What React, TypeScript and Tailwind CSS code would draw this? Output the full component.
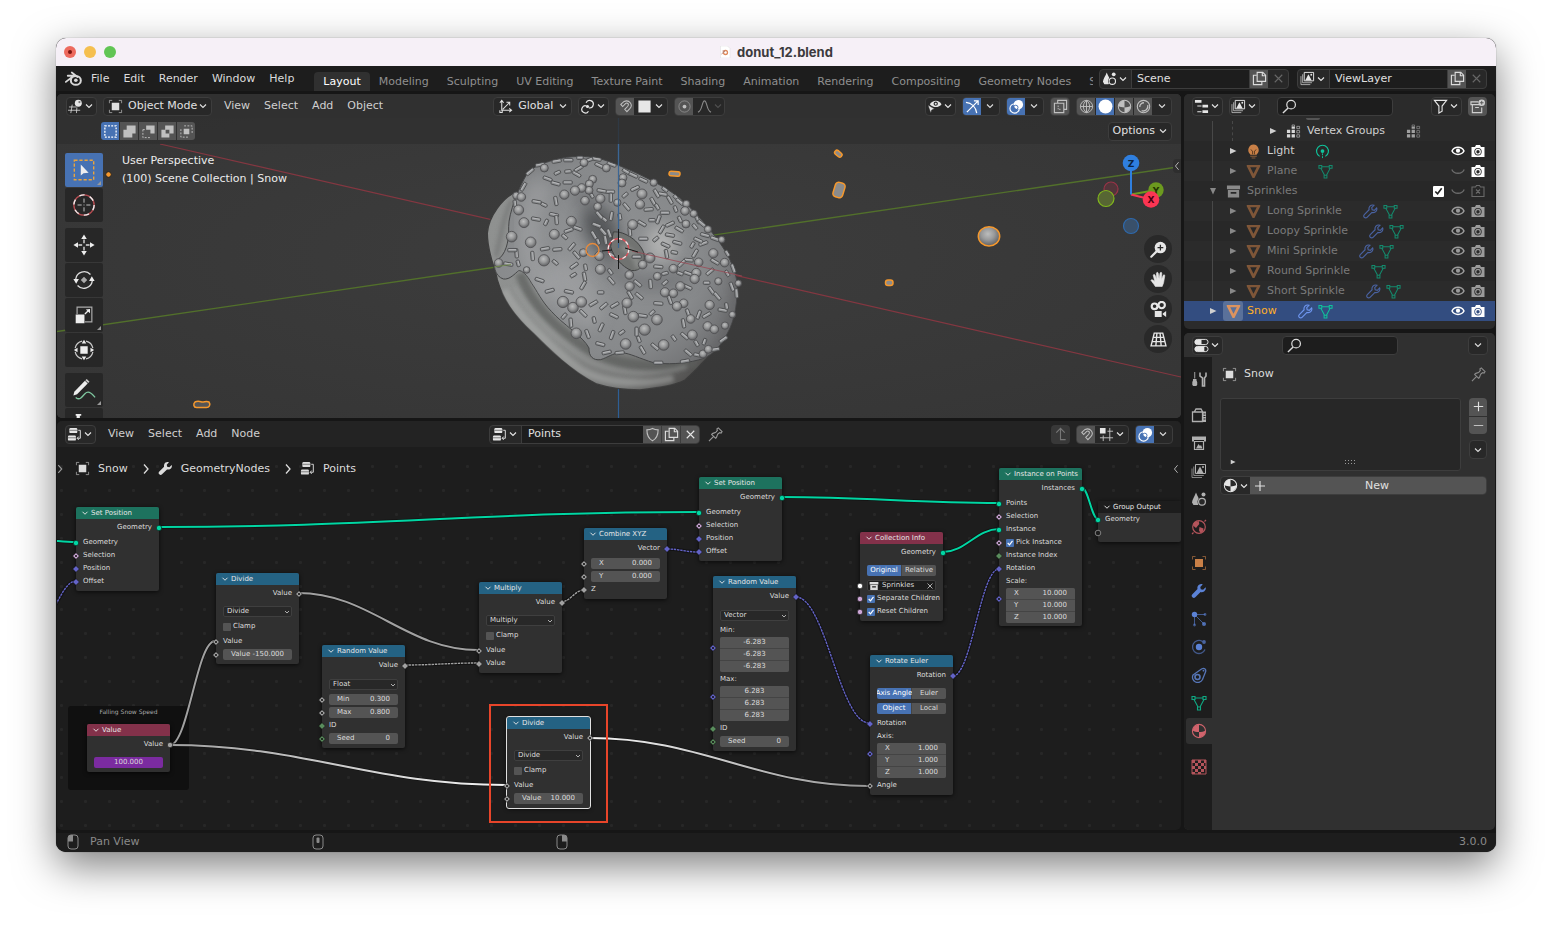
import React, { useId, type ReactNode } from 'react'
import clsx from 'clsx'

const TEAL = '#00d6a3'
const GREY = '#a1a1a1'
const VECTOR = '#6363c7'
const BOOL = '#cca6d6'
const INT = '#598c5c'

/* ---------- icons ---------- */

const corners = 'M1.5 4.5v-3h3M11.5 1.5h3v3M14.5 11.5v3h-3M4.5 14.5h-3v-3'
const wrench =
  'M14.6 4.2l-2.5 2.5-2.3-.5-.5-2.3 2.4-2.5c-2-.8-4.3.1-5.1 2.2-.3.9-.3 1.7-.1 2.5L1.4 11.3a2 2 0 0 0 0 2.9 2 2 0 0 0 2.9 0l5.3-5.2c2 .6 4.3-.4 5-2.4.3-.8.3-1.6 0-2.4z'

const ICONS: Record<string, ReactNode> = {
  blender: (
    <>
      <path d="M.8 11.200 8.300 5.400H2.600M6.400 2.400l5.400 4.200" fill="none" stroke="currentColor" strokeWidth="1.700" strokeLinecap="round" strokeLinejoin="round" />
      <ellipse cx="10.200" cy="9.800" rx="4.700" ry="4.100" fill="none" stroke="currentColor" strokeWidth="1.900" />
      <circle cx="10.200" cy="9.600" r="1.700" fill="currentColor" />
    </>
  ),
  view3d: (
    <>
      <path d="M1 8.500h8M0 12h13M4.500 6 3 15M9.500 9 9 15" fill="none" stroke="currentColor" opacity=".8" />
      <circle cx="11" cy="4.500" r="3.700" fill="currentColor" />
      <circle cx="12.200" cy="3.200" r="1.200" fill="#777" />
    </>
  ),
  object: (
    <>
      <path d={corners} fill="none" stroke="currentColor" opacity=".6" />
      <path d="M4 4h8v8H4z" fill="currentColor" />
    </>
  ),
  selSet: <path d="M2 2h12v12H2z" fill="none" stroke="currentColor" strokeWidth="1.400" strokeDasharray="2 1.400" />,
  selAdd: <path d="M5 1.500h9.500V10H11v4.500H1.500V6H5z" fill="currentColor" />,
  selSub: (
    <>
      <path d="M5.500 1.500h9V10H10V6H5.500z" fill="currentColor" />
      <path d="M2 6v8.500h8M2 6h3" fill="none" stroke="currentColor" strokeDasharray="2 1.500" />
    </>
  ),
  selXor: <path fillRule="evenodd" d="M5.500 1.500h9V10H10v4.500H1.500V6h4zM6 6v4h4V6z" fill="currentColor" />,
  selAnd: (
    <>
      <path d="M5.500 2h8.500v8.500M2 5.500V14h8.500" fill="none" stroke="currentColor" strokeDasharray="2 1.500" />
      <path d="M5 5h6v6H5z" fill="currentColor" />
    </>
  ),
  orient: (
    <path d="M4 2v10h10M2 4l2-2.500L6 4M12 10l2.500 2L12 14M5 11l7-7M9 3.500h3.500V7M2 12v2.500h2.500V12" fill="none" stroke="currentColor" strokeWidth="1.100" />
  ),
  pivot: (
    <>
      <path d="M7 7.500A3.800 3.800 0 1 0 9 13M9.500 9.500a4 4 0 1 0-3-5.500" fill="none" stroke="currentColor" strokeWidth="1.300" />
      <circle cx="8" cy="8" r="1.700" fill="currentColor" />
    </>
  ),
  magnet: (
    <path d="M3 5.800 6.500 2.600C12 .3 16.500 6 12.600 10.300L9.500 13.500 7.200 11l3-3C12.500 5 9.500 3.500 8 5L5 8z" fill="none" stroke="currentColor" strokeWidth="1.100" />
  ),
  square: <path d="M1.500 1.500h13v13h-13z" fill="currentColor" />,
  prop: (
    <>
      <circle cx="8" cy="8" r="6" fill="none" stroke="currentColor" opacity=".5" />
      <circle cx="8" cy="8" r="2" fill="currentColor" />
    </>
  ),
  falloff: <path d="M1 14C6 13 5 2 8 2s2 11 7 12" fill="none" stroke="currentColor" strokeWidth="1.200" />,
  vis: (
    <>
      <path d="M3 5.500C6 .5 13 .5 15.500 5.500 13 9.500 6 9.500 3 5.500z" fill="currentColor" />
      <circle cx="9.300" cy="5" r="2.300" fill="#282828" />
      <circle cx="9.300" cy="5" r="1.100" fill="currentColor" />
      <path d="m1 6.500 7 4-3 1.200L4 15z" fill="currentColor" stroke="#282828" strokeWidth=".5" />
    </>
  ),
  gizmo: (
    <path d="M1 3.500C7 4 11.500 8.500 12.500 15M2 14 14 2M9.500 2H14v4.500" fill="none" stroke="currentColor" strokeWidth="1.300" />
  ),
  overlays: (
    <>
      <circle cx="6" cy="10" r="5" fill="none" stroke="currentColor" strokeWidth="1.200" />
      <circle cx="10" cy="6" r="5" fill="currentColor" />
      <circle cx="7.200" cy="9" r="2.400" fill="none" stroke="#4772b3" />
    </>
  ),
  xray: (
    <>
      <path d="M5 4.500V1.500h9.500V11h-3M1.500 4.500h10v10h-10z" fill="none" stroke="currentColor" strokeWidth="1.200" />
      <path d="M5.500 7v4h3.500" fill="none" stroke="currentColor" strokeDasharray="1.500 1" />
    </>
  ),
  wire: (
    <path d="M1.500 8a6.500 6.500 0 1 0 13 0 6.500 6.500 0 1 0-13 0M8 1.500v13M1.500 8h13M8 1.500C3.500 5 3.500 11 8 14.500M8 1.500c4.500 3.500 4.500 9.500 0 13" fill="none" stroke="currentColor" />
  ),
  solid: <circle cx="8" cy="8" r="7.400" fill="currentColor" />,
  material: (
    <>
      <circle cx="8" cy="8" r="6.600" fill="none" stroke="currentColor" strokeWidth="1.100" />
      <path d="M8 1.700V9c-2.500 0-5-.4-6.300-1.500C2 4 4.500 1.700 8 1.700zM8 9c2.500 0 5-.5 6.300-1.500C14.500 11.500 11.500 14.300 8 14.300z" fill="currentColor" />
    </>
  ),
  rendered: (
    <>
      <circle cx="8" cy="8" r="6.600" fill="none" stroke="currentColor" strokeWidth="1.200" />
      <path d="M4 8.500A4.500 4.500 0 0 1 8.500 4M12.500 6.500A5 5 0 0 1 6 12.500" fill="none" stroke="currentColor" strokeWidth="1.400" />
    </>
  ),
  scene: (
    <>
      <path d="M5 1.500c1.500 4 3.500 6 3.500 9L7 14H2.500L1 11.500C1 8.500 4 5 5 1.500z" fill="currentColor" />
      <circle cx="12.500" cy="3.500" r="2" fill="currentColor" />
      <circle cx="11" cy="10.800" r="4.500" fill="#282828" />
      <circle cx="11" cy="10.800" r="3.400" fill="none" stroke="currentColor" strokeWidth="1.200" />
    </>
  ),
  copy: (
    <>
      <path d="M5.500 1.500h6l3 3V11h-9z" fill="none" stroke="currentColor" strokeWidth="1.200" />
      <path d="M11 1.500V5h3.500M5 4.500H1.500v10h9V11.500" fill="none" stroke="currentColor" strokeWidth="1.200" />
    </>
  ),
  close: <path d="m4 4 8 8M12 4l-8 8" fill="none" stroke="currentColor" strokeWidth="1.200" />,
  layers: (
    <>
      <path d="M4.500 1.500h10v9h-10z" fill="none" stroke="currentColor" />
      <path d="m5.500 10 3.500-6.500L12.500 10z" fill="currentColor" />
      <circle cx="12" cy="4" r="1" fill="currentColor" />
      <path d="M2.800 3.500v9h10M1 5.500v9h10" fill="none" stroke="currentColor" opacity=".7" />
    </>
  ),
  tree: (
    <path d="M1 1h7v3H1zM9 6h6v3H9zM9 12h6v3H9z M2.500 5h1v9H8v-1H3.500V8H8V7H3.500V5z" fill="currentColor" />
  ),
  search: (
    <>
      <circle cx="9.700" cy="6" r="4.600" fill="none" stroke="currentColor" strokeWidth="1.300" />
      <path d="M6.500 9.500 1 15" stroke="currentColor" strokeWidth="1.500" />
    </>
  ),
  filter: <path d="M1.500 1.500h13l-4.800 6V13l-3.400 2V7.500z" fill="none" stroke="currentColor" strokeWidth="1.200" />,
  newCol: (
    <>
      <path d="M9 3H1v3h11M2.500 6v8.500h10V9M5.500 9h4" fill="none" stroke="currentColor" strokeWidth="1.200" />
      <circle cx="12.500" cy="4" r="3.500" fill="currentColor" />
      <path d="M12.500 2v4M10.500 4h4" stroke="#545454" />
    </>
  ),
  vgroup: (
    <>
      <path d="M1 6h3.500v3.500H1zM1 11h3.500v3.500H1zM6 11h3.500v3.500H6zM6 6h3.500v3.500H6zM6 3h3.500v2H6z" fill="currentColor" />
      <path d="M6.500 1h2.500v2H6.500zM11.500 2.500h3v2.500h-3zM11.500 7h3v2.500h-3zM11.500 11.500h3V14h-3z" fill="none" stroke="currentColor" opacity=".6" />
    </>
  ),
  bulb: (
    <>
      <path d="M8 .5a6 6 0 0 1 3.500 10.500v.5h-7V11A6 6 0 0 1 8 .5z" fill="currentColor" />
      <path d="M4.500 12.500h7v1.200h-7zM6 14.500h4v1H6z" fill="currentColor" opacity=".6" />
      <path d="m5 6 2 1.500V11M11 6 9 7.500V11" fill="none" stroke="#5a3a20" />
    </>
  ),
  lightData: (
    <>
      <path d="M5 13.200a6.300 6.300 0 1 1 6 0" fill="none" stroke="currentColor" strokeWidth="1.200" />
      <circle cx="8" cy="7.500" r="2" fill="currentColor" />
      <path d="M8 10v6" stroke="currentColor" strokeDasharray="2 1" />
    </>
  ),
  mesh: <path fillRule="evenodd" d="M.8 1h14.400v1.500L9 15H7L.8 2.500zM4.500 3.500 8 10.500l3.500-7z" fill="currentColor" />,
  meshData: (
    <path d="M1 1.500h3v3H1zM12 1.500h3v3h-3zM6.500 12h3v3h-3zM4 3h8M3 4.500 7 12M13 4.500 9 12" fill="none" stroke="currentColor" strokeWidth="1.100" />
  ),
  wrenchLine: <path d={wrench} fill="none" stroke="currentColor" strokeWidth="1.200" />,
  wrench: <path d={wrench} fill="currentColor" />,
  eye: (
    <>
      <path d="M2 8c2.500-5 9.500-5 12 0-2.500 4.500-9.500 4.500-12 0z" fill="none" stroke="currentColor" strokeWidth="1.500" />
      <circle cx="8" cy="7.700" r="2.100" fill="currentColor" />
    </>
  ),
  eyeOff: <path d="M1.800 6.500c2 5 10.400 5 12.400 0" fill="none" stroke="currentColor" strokeWidth="1.300" />,
  camera: (
    <>
      <path fillRule="evenodd" d="M1.500 4H5l1-2h4l1 2h3.500v10h-13zM8 5a3.700 3.700 0 1 0 0 7.400A3.700 3.700 0 0 0 8 5z" fill="currentColor" />
      <circle cx="8" cy="8.700" r="2.300" fill="none" stroke="currentColor" strokeWidth="1.200" />
    </>
  ),
  cameraOff: (
    <path d="M2 4h3.500l1-1.500h3l1 1.500H14v9.500H2zM6 6.500l4 4M10 6.500l-4 4" fill="none" stroke="currentColor" strokeWidth="1.100" />
  ),
  collection: (
    <path fillRule="evenodd" d="M1 1.500h14v4H1zM2 6.500h12v8H2zM5 8.500v2h6v-2z" fill="currentColor" />
  ),
  props: (
    <>
      <rect x="1" y="1.500" width="14" height="5.500" rx="2.700" fill="none" stroke="currentColor" />
      <rect x="1" y="9" width="14" height="5.500" rx="2.700" fill="none" stroke="currentColor" />
      <path d="M3.500 1.500H8V7H3.500a2.700 2.700 0 0 1 0-5.500zM3.500 9H11v5.500H3.500a2.700 2.700 0 0 1 0-5.500z" fill="currentColor" />
    </>
  ),
  tool: (
    <>
      <path d="M3.300 1h.9v6.500h-.9zM2 8h3.500v1.500l.7 1.500v3l-1 1H2.300l-1-1v-3L2 9.500z" fill="currentColor" />
      <path d="M9 1.500v3.500l2.500 2V15h2V7L15 5V1.500" fill="none" stroke="currentColor" strokeWidth="1.600" />
    </>
  ),
  renderTab: (
    <>
      <path d="M1.500 5h10v9.500h-10zM3.500 4.500 5 2h5l1.500 2.500" fill="none" stroke="currentColor" strokeWidth="1.300" />
      <path d="M11.500 4.500h3.500V15h-3.500z" fill="currentColor" />
      <path d="M12.500 7h2M12.500 9.500h2M12.500 12h2" stroke="#1d1d1d" />
    </>
  ),
  outputTab: (
    <>
      <path d="M1 1.500h14v5h-2V5H3v1.500H1z" fill="currentColor" />
      <path d="M3.500 6.500h9v8h-9z" fill="none" stroke="currentColor" strokeWidth="1.200" />
      <path d="m5 13.500 2.500-4.500 1.500 2 1-1 1.500 3.500z" fill="currentColor" />
    </>
  ),
  world: (
    <>
      <circle cx="8" cy="8" r="6.300" fill="none" stroke="currentColor" strokeWidth="1.200" />
      <path d="M2.500 4.500C5 1.500 6 3 8 2c-.5 3 1.500 2-1 4.500L5 9 2 6.500zM8.500 8l4 1.500-.5 3-2.500 1.500L8 11.500z" fill="currentColor" />
      <path d="m1 15 1.500-1.500M13.500 2.500 15 1" stroke="currentColor" strokeWidth="1.200" />
    </>
  ),
  particles: (
    <>
      <path d="M3.500 3.500 13 13M3.500 3.500H14M3.500 3.500V14" stroke="currentColor" opacity=".6" />
      <circle cx="3.500" cy="3.500" r="2.700" fill="currentColor" />
      <circle cx="13" cy="13" r="2" fill="currentColor" opacity=".8" />
      <circle cx="14" cy="3.500" r="1.400" fill="currentColor" opacity=".6" />
      <circle cx="3.500" cy="14" r="1.400" fill="currentColor" opacity=".6" />
    </>
  ),
  physics: (
    <>
      <path d="M11.500 2.500a6.500 6.500 0 1 0 2.500 8" fill="none" stroke="currentColor" strokeWidth="1.300" opacity=".6" />
      <circle cx="8" cy="8" r="3.200" fill="currentColor" />
      <circle cx="13" cy="3" r="1.900" fill="currentColor" opacity=".7" />
    </>
  ),
  constraint: (
    <>
      <path d="M2 8 10.500 2c3-1.500 5 .5 4 3l-3 7.500A5 5 0 1 1 2 8z" fill="none" stroke="currentColor" strokeWidth="1.300" />
      <circle cx="6.500" cy="10" r="2.500" fill="none" stroke="currentColor" strokeWidth="1.600" />
      <circle cx="12.500" cy="3.700" r=".9" fill="currentColor" />
    </>
  ),
  checker: (
    <>
      <path d="M1 1h14v14H1z" fill="none" stroke="currentColor" />
      <path d="M1 1h3v3H1zM7 1h3v3H7zM4 4h3v3H4zM10 4h3v3h-3zM1 7h3v3H1zM7 7h3v3H7zM4 10h3v3H4zM10 10h3v3h-3zM1 13h3v2H1zM7 13h3v2H7zM13 1h2v3h-2zM13 7h2v3h-2z" fill="currentColor" />
    </>
  ),
  pin: (
    <path d="m1 15 5-5M3.500 7.500l5 5M4 7.500c2-1.500 3.500-1 4.500-2L10 3.500l-.5-1.500 1.500-1L15 5l-1 1.500-1.500-.5-2 1.500c-1 1-.5 2.500-2 4.500" fill="none" stroke="currentColor" strokeWidth="1.200" />
  ),
  nodes: (
    <>
      <rect x="2.500" y="1" width="8.500" height="5.500" rx="1.300" fill="currentColor" />
      <path d="M2.500 3.500H11" stroke="#777" />
      <rect x="1" y="9" width="8.500" height="5.500" rx="1.300" fill="currentColor" />
      <path d="M1 11.500h8.500" stroke="#777" />
      <path d="M12 3.500h2.200V12H11m1.500-1.800L10.800 12l1.700 1.800" fill="none" stroke="currentColor" />
    </>
  ),
  shield: <path d="M8 1.500c2 1.200 4 1.500 6 1.500 0 5-1.500 9.500-6 11.700C3.500 12.500 2 8 2 3c2 0 4-.3 6-1.500z" fill="none" stroke="currentColor" strokeWidth="1.200" />,
  parent: <path d="M8 2v11.500h5.500M3.500 6 8 1.500 12.500 6" fill="none" stroke="currentColor" strokeWidth="1.200" />,
  snapGrid: (
    <>
      <path d="M1 1h6v6H1z" fill="currentColor" />
      <path d="M9 4.500h6M1 11.500h14M4.500 9v6M11.500 1v14" stroke="currentColor" opacity=".8" />
    </>
  ),
  plus: <path d="M8 3v10M3 8h10" stroke="currentColor" strokeWidth="1.200" />,
  minus: <path d="M3 8h10" stroke="currentColor" strokeWidth="1.200" />,
  zoom: (
    <>
      <circle cx="9.800" cy="6.200" r="5.400" fill="currentColor" />
      <path d="M6 10 1.200 14.800" stroke="currentColor" strokeWidth="2" strokeLinecap="round" />
      <path d="M9.800 3.500v5.400M7.100 6.200h5.400" stroke="#282828" strokeWidth="1.200" />
    </>
  ),
  hand: (
    <path d="M5 14.500C3.500 12 2 10.500.8 8.800c.7-1 2-.5 3.700 1.200L3 3.800c.6-1 1.500-.6 1.800.2L6.300 8 6 2c.5-1 1.500-.9 1.700 0L8.500 7.500l1-5.700c.5-.9 1.600-.6 1.600.3L10.800 8l1.700-4c.6-.7 1.500-.3 1.400.5L12.800 11l-1.300 3.500z" fill="currentColor" stroke="currentColor" strokeWidth=".6" strokeLinejoin="round" />
  ),
  movie: (
    <>
      <circle cx="4.300" cy="5" r="2.700" fill="none" stroke="currentColor" strokeWidth="2" />
      <circle cx="11" cy="3.800" r="3" fill="none" stroke="currentColor" strokeWidth="2" />
      <path d="M4.500 9.500h6.500V15H4.500zM15.200 9.500V15L12 12.800v-1z" fill="currentColor" />
    </>
  ),
  persp: (
    <path d="M4 2h8l3 12H1zM3 6h10M2 10h12M6.500 2 5.500 14M9.500 2l1 12" fill="none" stroke="currentColor" strokeWidth="1.300" />
  ),
  mouseL: (
    <>
      <rect x="3" y="1" width="10" height="14" rx="3" fill="none" stroke="currentColor" />
      <path d="M8 1v6.500H3V4a3 3 0 0 1 3-3z" fill="currentColor" />
    </>
  ),
  mouseM: (
    <>
      <rect x="3" y="1" width="10" height="14" rx="3" fill="none" stroke="currentColor" />
      <rect x="6.500" y="3.500" width="3" height="5.500" rx="1" fill="currentColor" />
    </>
  ),
  mouseR: (
    <>
      <rect x="3" y="1" width="10" height="14" rx="3" fill="none" stroke="currentColor" />
      <path d="M8 1v6.500h5V4a3 3 0 0 0-3-3z" fill="currentColor" />
    </>
  ),
  down: <path d="m4 6 4 4 4-4" fill="none" stroke="currentColor" strokeWidth="1.500" />,
  right: <path d="m6 3.500 4 4.500-4 4.500" fill="none" stroke="currentColor" strokeWidth="1.300" />,
  left: <path d="m10.500 2-5 6 5 6" fill="none" stroke="currentColor" strokeWidth="1.500" />,
  triRight: <path d="m5 5 6.500 3L5 11z" fill="currentColor" />,
  triDown: <path d="M5 5h6l-3 6.500z" fill="currentColor" />,
}

function Icon({ name, className = 'size-4' }: { name: string; className?: string }) {
  return (
    <svg viewBox="0 0 16 16" aria-hidden className={clsx('shrink-0', className)}>
      {ICONS[name]}
    </svg>
  )
}

/* ---------- shared controls ---------- */

const frame = 'rounded-[4px] border border-[#3d3d3d] bg-[#282828]'

function MenuBtn({ icon, label, dim }: { icon: string; label: string; dim?: boolean }) {
  return (
    <button
      aria-label={label}
      className={clsx('flex h-[19px] w-[31px] items-center justify-center', frame, dim ? 'text-[#888]' : 'text-[#e6e6e6]')}
    >
      <Icon name={icon} className="size-[15px]" />
      <Icon name="down" className="size-3" />
    </button>
  )
}

function IconBtn({ icon, label, active, className }: { icon: string; label: string; active?: boolean; className?: string }) {
  return (
    <button
      aria-label={label}
      aria-pressed={active}
      className={clsx(
        'flex h-full w-[18px] shrink-0 items-center justify-center',
        active ? 'bg-[#4772b3] text-white' : 'bg-[#545454]',
        !active && (className ?? 'text-[#c0c0c0]'),
      )}
    >
      <Icon name={icon} className="size-[15px]" />
    </button>
  )
}

function DownBtn({ label }: { label: string }) {
  return (
    <button aria-label={label} className="flex h-full w-[18px] items-center justify-center text-[#dcdcdc]">
      <Icon name="down" className="size-3" />
    </button>
  )
}

function Group({ children, className }: { children: ReactNode; className?: string }) {
  return <div className={clsx('flex h-[19px] items-stretch overflow-hidden', frame, className)}>{children}</div>
}

function HeaderSelect({ icon, label, value, className }: { icon: string; label: string; value: string; className: string }) {
  return (
    <label className={clsx('relative flex h-[19px] items-center pl-1 text-[#e0e0e0]', frame, className)}>
      <Icon name={icon} className="size-[15px]" />
      <select aria-label={label} className="h-full w-full min-w-0 appearance-none bg-transparent pl-[5px] leading-4 outline-none">
        <option>{value}</option>
      </select>
      <Icon name="down" className="pointer-events-none absolute right-0.5 size-3" />
    </label>
  )
}

function SearchBox({ label, className }: { label: string; className?: string }) {
  return (
    <label className={clsx('flex h-[19px] w-[116px] items-center rounded-[4px] border border-[#3d3d3d] bg-[#1d1d1d] pl-1 text-[#dcdcdc]', className)}>
      <Icon name="search" className="size-[15px]" />
      <input aria-label={label} className="w-full min-w-0 bg-transparent px-1 outline-none" />
    </label>
  )
}

function Menus({ items }: { items: string[] }) {
  return (
    <nav className="flex gap-3.5 text-[#cfcfcf]">
      {items.map(item => <button key={item}>{item}</button>)}
    </nav>
  )
}

/* ---------- top bar ---------- */

const WORKSPACES = [
  'Layout', 'Modeling', 'Sculpting', 'UV Editing', 'Texture Paint', 'Shading',
  'Animation', 'Rendering', 'Compositing', 'Geometry Nodes', 'Scripting',
]

function DataSelector({ icon, value }: { icon: string; value: string }) {
  return (
    <div className={clsx('flex h-5 w-[190px] shrink-0 items-stretch overflow-hidden', frame)}>
      <button aria-label={`Browse ${value}`} className="flex items-center px-0.5 text-[#e6e6e6]">
        <Icon name={icon} className="size-[15px]" />
        <Icon name="down" className="size-3" />
      </button>
      <input aria-label={value} defaultValue={value} className="w-full min-w-0 border-x border-[#3d3d3d] bg-[#1d1d1d] px-[5px] text-[#e0e0e0] outline-none" />
      <IconBtn icon="copy" label="New" className="text-[#dcdcdc]" />
      <button aria-label="Unlink" className="flex w-5 shrink-0 items-center justify-center text-[#666]">
        <Icon name="close" className="size-[15px]" />
      </button>
    </div>
  )
}

function TopBar() {
  return (
    <div className="flex h-[25px] shrink-0 items-center bg-[#1d1d1d] pr-[9px] pl-[9px]">
      <button aria-label="Blender menu" className="text-[#d8d8d8]"><Icon name="blender" className="size-[17px]" /></button>
      <nav className="ml-[9px] flex gap-3.5 text-[#dcdcdc]">
        {['File', 'Edit', 'Render', 'Window', 'Help'].map(m => <button key={m}>{m}</button>)}
      </nav>
      <div role="tablist" className="ml-5 flex min-w-0 flex-1 self-end overflow-hidden">
        {WORKSPACES.map((w, i) => (
          <button
            key={w}
            role="tab"
            aria-selected={i === 0}
            className={clsx(
              'h-[19px] shrink-0 rounded-t-[4px] px-[9px] whitespace-nowrap',
              i === 0 ? 'bg-[#303030] text-white' : 'text-[#8f8f8f]',
            )}
          >
            {w}
          </button>
        ))}
      </div>
      <div className="ml-1.5 flex gap-2">
        <DataSelector icon="scene" value="Scene" />
        <DataSelector icon="layers" value="ViewLayer" />
      </div>
    </div>
  )
}

/* ---------- 3D viewport ---------- */

// x, y, radius
const BALLS = [
  [313, 324, 11], [432, 308, 11], [499, 324, 11], [549, 353, 11], [546, 369, 11], [641, 368, 10], [606, 402, 14],
  [600, 433, 13], [458, 358, 11], [448, 372, 11], [447, 391, 11], [425, 384, 12], [405, 392, 13], [373, 404, 13],
  [481, 416, 13], [435, 422, 12], [473, 440, 11], [532, 428, 10], [394, 484, 14], [343, 523, 14], [229, 407, 10],
  [244, 411, 12], [236, 450, 14], [252, 488, 14], [215, 530, 15], [272, 547, 15], [312, 601, 16], [578, 494, 14],
  [739, 432, 10], [735, 453, 12], [761, 461, 10], [738, 492, 11], [804, 508, 10], [845, 539, 9], [820, 580, 13],
  [854, 608, 12], [776, 607, 12], [769, 639, 13], [764, 657, 13], [835, 664, 10], [895, 670, 9], [877, 764, 9],
  [630, 594, 14], [608, 614, 12], [700, 626, 12], [652, 649, 11], [568, 645, 12], [481, 628, 14], [478, 588, 13],
  [430, 578, 11], [569, 679, 13], [561, 729, 14], [721, 679, 13], [675, 697, 13], [700, 700, 12], [731, 730, 12],
  [711, 739, 13], [809, 735, 13], [580, 770, 15], [651, 779, 15], [752, 777, 12], [614, 809, 16], [803, 799, 13],
  [823, 808, 12], [757, 825, 14], [855, 797, 10], [671, 855, 15], [557, 852, 15], [369, 726, 16], [399, 743, 15],
  [424, 726, 15], [409, 820, 15], [789, 882, 11], [805, 868, 11], [260, 630, 9], [176, 609, 12],
]

// x, y, angle
const RODS = [
  [323, 356, 20], [352, 338, -25], [347, 370, 15], [410, 342, 30], [416, 325, -30], [384, 334, -5], [383, 367, 0],
  [478, 316, 25], [348, 423, 80], [312, 434, 25], [290, 425, 10], [342, 464, 12], [350, 480, 85], [318, 487, -65],
  [288, 477, 10], [386, 511, -20], [413, 505, 20], [374, 530, 40], [352, 568, -5], [315, 566, -10], [278, 588, 85],
  [346, 607, 40], [299, 660, 18], [329, 692, -15], [402, 617, -35], [400, 645, -30], [387, 695, 12], [434, 650, 80],
  [429, 676, -60], [437, 622, 80], [395, 560, -50], [410, 585, 50], [460, 730, -30], [482, 697, 0], [491, 738, -40],
  [524, 735, -30], [522, 767, 25], [463, 780, 78], [483, 802, -65], [443, 822, 70], [393, 788, 85], [372, 768, -50],
  [430, 760, 45], [481, 852, 15], [516, 825, -70], [545, 817, -35], [500, 877, -12], [539, 878, -5], [590, 815, 90],
  [597, 838, 70], [608, 870, 60], [555, 750, 80], [608, 767, 8], [636, 758, -45], [598, 708, 40], [571, 705, 60],
  [514, 662, 50], [511, 635, 55], [593, 670, 40], [632, 672, 85], [645, 860, 40], [702, 834, 55], [734, 828, 40],
  [731, 790, 80], [745, 760, 70], [675, 668, -40], [655, 730, 5], [690, 720, 70], [743, 681, 25], [800, 668, 0],
  [810, 635, -40], [815, 692, 55], [832, 708, 50], [862, 640, 60], [880, 625, 70], [890, 700, 85], [848, 750, 10],
  [860, 738, 80], [876, 680, 70], [776, 764, -70], [800, 765, -30], [793, 845, -70], [850, 838, -35], [825, 868, -10],
  [745, 878, 40], [770, 850, 60], [735, 903, -10], [655, 908, 0], [775, 885, 10], [675, 640, -15], [655, 620, 5],
  [680, 582, 80], [677, 555, 25], [703, 577, 10], [712, 548, 15], [690, 525, 10], [665, 508, -60], [647, 537, -40],
  [610, 536, 0], [570, 515, 85], [606, 490, 30], [636, 480, 0], [655, 478, -70], [675, 458, 0], [690, 492, -25],
  [720, 478, 65], [718, 508, 30], [712, 415, 40], [690, 420, 60], [707, 447, 70], [668, 402, 10], [650, 400, 60],
  [640, 425, 60], [652, 440, 60], [626, 448, -5], [585, 385, -25], [560, 440, 50], [555, 405, -40], [510, 395, 0],
  [513, 413, 90], [485, 392, 10], [540, 470, 80], [514, 468, -80], [490, 475, 40], [478, 465, 50], [455, 405, 60],
  [560, 335, 30], [580, 345, 25], [610, 360, 25], [765, 500, 50], [773, 478, 65], [795, 525, 15], [790, 550, -20],
  [757, 555, -60], [765, 580, -60], [746, 600, 5], [725, 610, -45], [720, 640, 20], [745, 640, 20], [775, 540, 25],
  [825, 536, 20], [862, 580, 60], [825, 605, 30], [590, 590, 0], [462, 525, 60], [475, 545, 70], [490, 515, 50],
  [497, 540, 80], [508, 520, 70], [515, 585, 40], [470, 495, 20], [230, 580, 85], [217, 570, 0], [235, 610, 75],
  [205, 612, 10], [270, 335, -40], [250, 380, -60], [225, 430, 85], [300, 314, -10], [350, 303, -10], [385, 300, 0],
  [420, 293, 0], [470, 297, 10], [445, 300, -20], [515, 313, 20], [675, 388, 35], [720, 425, 40], [785, 490, 40],
]

const ICING =
  'M262 340C275 322 320 302 380 292C430 286 470 290 510 306C560 325 630 355 690 393C730 420 770 460 800 498C840 545 880 600 890 660C895 720 885 780 862 820C840 865 810 892 775 900C730 912 680 914 640 908C600 896 570 880 545 878C515 880 505 892 482 899C460 902 446 890 447 864C430 830 365 790 335 755C305 725 290 690 275 670C262 645 245 630 236 632C225 640 210 660 190 657C165 650 155 610 172 600C195 585 208 550 206 500C206 460 235 385 262 340Z'
const BASE =
  'M230 395C190 410 145 470 142 520C142 580 165 620 172 660C190 720 220 765 280 820C330 870 390 930 470 972C510 985 560 990 600 990C650 984 700 978 735 960C765 935 780 915 810 885L600 600Z'

function Donut() {
  return (
    <g transform="translate(440 60) scale(.3333)">
      <clipPath id="baseClip"><path d={BASE} /></clipPath>
      <path d={BASE} fill="url(#dough)" stroke="#3c3c3c" strokeWidth="4" />
      <g clipPath="url(#baseClip)" fill="none">
        <path d="M240 640C270 730 350 810 450 870C530 915 640 930 770 905" stroke="#5b5d5c" strokeWidth="30" opacity=".7" filter="url(#soft)" />
        <path d="M192 690C240 780 330 860 420 930C500 975 620 975 700 955" stroke="#b3b5b4" strokeWidth="22" opacity=".45" filter="url(#soft)" />
        <path d="M225 680C275 770 360 850 450 905C540 945 640 950 740 920" stroke="#9c9e9d" strokeWidth="10" opacity=".6" filter="url(#soft)" />
        <path d="M215 420C185 480 182 540 168 590" stroke="#6c6d6d" strokeWidth="10" opacity=".7" filter="url(#soft)" />
      </g>
      <path d={ICING} fill="url(#icing)" stroke="#444546" strokeWidth="3" />
      <clipPath id="icingClip"><path d={ICING} /></clipPath>
      <g clipPath="url(#icingClip)">
        <path d="M310 370C250 470 240 590 330 710" fill="none" stroke="#b0b1b3" strokeWidth="60" opacity=".4" filter="url(#blur)" />
        <ellipse cx="665" cy="550" rx="45" ry="55" fill="#cbcbc9" opacity=".6" filter="url(#blur)" />
        <ellipse cx="400" cy="700" rx="60" ry="120" transform="rotate(-35 400 700)" fill="#aeafb1" opacity=".4" filter="url(#blur)" />
        <path d="M905 620C905 760 870 860 790 925" fill="none" stroke="#58595a" strokeWidth="50" opacity=".6" filter="url(#blur)" />
        <path d="M400 400C470 430 500 470 520 510M480 590C530 670 640 690 740 650" fill="none" stroke="#5c5d60" strokeWidth="40" opacity=".5" filter="url(#blur)" />
        <ellipse cx="485" cy="520" rx="45" ry="85" transform="rotate(-32 485 520)" fill="#3e3f42" opacity=".7" filter="url(#blur)" />
        <path d="M520 516C555 512 600 545 612 580C618 615 600 634 575 632C545 620 520 590 512 560Z" fill="#717371" stroke="#3f4040" strokeWidth="3" />
        <path d="M545 560C570 570 590 590 596 625" fill="none" stroke="#999b99" strokeWidth="18" opacity=".6" filter="url(#soft)" />
      </g>
      {RODS.map(([x, y, a], i) => {
        const len = i % 4 === 1 ? 20 : 28
        return (
          <g key={i} transform={`translate(${x} ${y}) rotate(${a})`}>
            <rect x={-len / 2} y="-4.500" width={len} height="10" rx="3" fill="#8f9193" stroke="#4b4c4e" strokeWidth="2.500" />
            <path d={`M${3 - len / 2} -1h${len - 6}`} stroke="#b5b6b8" strokeWidth="3" />
          </g>
        )
      })}
      {BALLS.map(([x, y, r], i) => (
        <circle key={i} cx={x} cy={y} r={r + 1} fill="url(#ball)" stroke="#505153" strokeWidth="2.500" />
      ))}
    </g>
  )
}

function Scene() {
  return (
    <svg
      viewBox="57 94 1124 324"
      preserveAspectRatio="xMidYMid slice"
      className="absolute inset-0 size-full font-['DejaVu_Sans',sans-serif] text-[9px]"
    >
      <defs>
        <radialGradient id="bg" cx=".5" cy=".5" r=".7">
          <stop offset="0" stopColor="#3d3d3d" />
          <stop offset="1" stopColor="#353535" />
        </radialGradient>
        <linearGradient id="dough" x1="0" y1="0" x2="1" y2="1">
          <stop offset="0" stopColor="#8f9190" />
          <stop offset=".5" stopColor="#8e908f" />
          <stop offset=".8" stopColor="#757675" />
          <stop offset="1" stopColor="#3b3938" />
        </linearGradient>
        <radialGradient id="icing" cx=".4" cy=".5" r=".65">
          <stop offset="0" stopColor="#929496" />
          <stop offset=".7" stopColor="#87898b" />
          <stop offset="1" stopColor="#727375" />
        </radialGradient>
        <radialGradient id="ball" cx=".45" cy=".38" r=".6">
          <stop offset="0" stopColor="#bcbdbd" />
          <stop offset=".5" stopColor="#999a9b" />
          <stop offset="1" stopColor="#636466" />
        </radialGradient>
        <filter id="soft" x="-20%" y="-20%" width="140%" height="140%"><feGaussianBlur stdDeviation="7" /></filter>
        <filter id="blur" x="-60%" y="-60%" width="220%" height="220%"><feGaussianBlur stdDeviation="22" /></filter>
      </defs>
      <rect x="57" y="94" width="1124" height="324" fill="url(#bg)" />
      <path d="m160 144 1021 233" stroke="#843741" strokeWidth="1.200" />
      <path d="M57 331.500 1181 166.500" stroke="#52702b" strokeWidth="1.300" />
      <path d="M618.500 118v300" stroke="#2e5f96" strokeWidth="1.200" />
      <Donut />
      <path d="M618.500 144v104" stroke="#3b6694" strokeWidth="1.200" />
      <path d="m632 251 110 25" stroke="#9a4a55" opacity=".8" />
      <path d="m494 267 17-2.500" stroke="#6f8d46" opacity=".8" />
      <g fill="none">
        <circle cx="618.500" cy="249" r="10.300" stroke="#e04f58" strokeWidth="1.200" />
        <circle cx="618.500" cy="249" r="10.300" stroke="#eee" strokeWidth="1.200" strokeDasharray="4 4" />
        <path d="M618.500 229v14M618.500 255v14M602 251l10-1M625 248l13 4" stroke="#161616" />
        <circle cx="592.500" cy="250" r="6.500" stroke="#e58a3c" strokeWidth="1.400" />
      </g>
      <g fill="#8b8b8b" stroke="#f5982d" strokeWidth="1.500">
        <rect x="669" y="171.500" width="11" height="4.500" rx="2" transform="rotate(5 674 174)" />
        <rect x="834.500" y="151.500" width="8" height="4.500" rx="2" transform="rotate(40 838.500 153.500)" />
        <rect x="834" y="182.500" width="10" height="15" rx="3.500" transform="rotate(17 839 190)" />
        <ellipse cx="989" cy="236.300" rx="10.700" ry="9.600" fill="url(#ball)" />
        <rect x="885.500" y="280" width="7.500" height="5.500" rx="2.500" />
        <path d="M195 402c3-1.500 5-.5 7 0s4-1.500 7 0c2 3 0 5.500-2.500 5.500h-10c-3 0-3.500-3.500-1.500-5.500z" fill="#555" />
      </g>
      <circle cx="108.500" cy="174.500" r="2.800" fill="#f5982d" stroke="#222" />
      {/* orientation gizmo */}
      <g textAnchor="middle" strokeWidth="1.200">
        <circle cx="1111" cy="189" r="7" fill="#52353a" stroke="#993347" />
        <circle cx="1106" cy="198.500" r="8" fill="#576633" stroke="#80b51d" />
        <circle cx="1131" cy="226" r="7.500" fill="#39506a" stroke="#2e69ad" />
        <path d="M1131 194.500 1156 190" stroke="#6c9a1f" strokeWidth="2" />
        <circle cx="1156" cy="190" r="7.700" fill="#6c9a1f" />
        <text x="1156" y="193.500" className="fill-[#223300] font-bold">Y</text>
        <path d="m1131 194.500 20 5" stroke="#fb3553" strokeWidth="2" />
        <circle cx="1151" cy="199.500" r="8.300" fill="#fb3553" />
        <text x="1151" y="203" className="fill-[#4c0010] font-bold">X</text>
        <path d="M1131 194.500V163" stroke="#2f7fdf" strokeWidth="2" />
        <circle cx="1131" cy="163" r="8.300" fill="#2f7fdf" />
        <text x="1131" y="166.500" className="fill-[#0b2340] font-bold">Z</text>
      </g>
    </svg>
  )
}

const TOOLS: { label: string; art: ReactNode; corner?: boolean; gap?: boolean }[] = [
  {
    label: 'Select Box',
    corner: true,
    art: (
      <>
        <path d="M2.500 2.500h21v21h-21z" fill="none" stroke="#e9a43c" strokeWidth="1.500" strokeDasharray="3.500 2" />
        <path d="M9.500 7v12l3-2.500 5.500-.5z" fill="#eee" />
      </>
    ),
  },
  {
    label: 'Cursor',
    art: (
      <g fill="none">
        <circle cx="13" cy="13" r="11" stroke="#b04a4f" strokeWidth="1.500" />
        <circle cx="13" cy="13" r="11" stroke="#eee" strokeWidth="1.500" strokeDasharray="5.800 5.800" />
        <path d="M13 6v4.500M13 15.500V20M6 13h4.500M15.500 13H20M13 12.500v1" stroke="#ccc" />
      </g>
    ),
  },
  {
    label: 'Move',
    gap: true,
    art: (
      <>
        <path d="m13 1.500 3 5h-6zM13 24.500l3-5h-6zM1.500 13l5-3v6zM24.500 13l-5-3v6z" fill="#eee" />
        <path d="M13 7v4M13 15v4M7 13h4M15 13h4" stroke="#ddd" strokeWidth="1.500" />
      </>
    ),
  },
  {
    label: 'Rotate',
    art: (
      <>
        <path d="M4 12a9.300 9.300 0 0 1 16-5M22 14a9.300 9.300 0 0 1-16 5" fill="none" stroke="#ddd" strokeWidth="1.400" />
        <path d="M1.500 12h6L4.500 17zM18.500 14h6L21.500 9z" fill="#eee" />
        <path d="m13 9.500 3.500 3.500-3.500 3.500L9.500 13z" fill="#aaa" />
      </>
    ),
  },
  {
    label: 'Scale',
    corner: true,
    art: (
      <>
        <path d="M5.500 12V4.500h16v16H14" fill="none" stroke="#aaa" strokeWidth="1.300" />
        <path d="M4 12.500h9.500V22H4zM19.500 6.500v4.500L15 7z" fill="#eee" />
        <path d="m14 12 4-4" stroke="#eee" strokeWidth="1.500" />
      </>
    ),
  },
  {
    label: 'Transform',
    art: (
      <>
        <circle cx="13" cy="13" r="9.800" fill="none" stroke="#ccc" strokeWidth="1.300" strokeDasharray="11 4.400" strokeDashoffset="-2" />
        <path d="M9 9h8v8H9zM13 2l2.500 4h-5zM13 24l2.500-4h-5zM2 13l4-2.500v5zM24 13l-4-2.500v5z" fill="#eee" />
      </>
    ),
  },
  {
    label: 'Annotate',
    corner: true,
    gap: true,
    art: (
      <>
        <path d="M4 21c5 4 7-1 10-4s6-2 11 4" fill="none" stroke="#7fc8a0" strokeWidth="1.400" />
        <path d="m1.500 19 1-4L14 3l3 3L5.500 17.500z" fill="#eee" />
        <path d="m14.500 2.500 1.500-1.500 3 3-1.500 1.500z" fill="#ccc" />
      </>
    ),
  },
  { label: 'Measure', art: <path d="M4 1h6v2H8.500v4h2v4H5V3H4z" fill="#eee" /> },
]

function Toolbar() {
  return (
    <div className="ml-2 flex w-[38px] flex-col gap-px overflow-hidden pt-[9px]">
      {TOOLS.map((t, i) => (
        <button
          key={t.label}
          aria-label={t.label}
          className={clsx(
            'relative flex h-[34px] shrink-0 items-center justify-center rounded-[2px]',
            t.gap && 'mt-[5px]',
            i === 0 ? 'bg-[#4772b3]' : 'bg-[#272727]',
          )}
        >
          <svg viewBox="0 0 26 26" className="size-6" aria-hidden>{t.art}</svg>
          {t.corner && (
            <svg viewBox="0 0 4 4" className="absolute right-0.5 bottom-0.5 size-1" aria-hidden>
              <path d="M4 0v4H0z" fill="#999" />
            </svg>
          )}
        </button>
      ))}
    </div>
  )
}

function Viewport() {
  return (
    <section className="relative flex min-h-0 flex-[324] flex-col overflow-hidden rounded-[5px] bg-[#393939]">
      <Scene />
      <header className="relative flex h-6 shrink-0 items-center bg-[#303030] px-[9px]">
        <MenuBtn icon="view3d" label="Editor type" />
        <HeaderSelect icon="object" label="Mode" value="Object Mode" className="ml-1.5 w-[109px]" />
        <div className="ml-3"><Menus items={['View', 'Select', 'Add', 'Object']} /></div>
        <div className="ml-[110px] flex gap-1.5">
          <HeaderSelect icon="orient" label="Transform orientation" value="Global" className="w-[79px]" />
          <MenuBtn icon="pivot" label="Pivot point" />
          <Group>
            <IconBtn icon="magnet" label="Snap" />
            <button aria-label="Snap to" className="flex items-center pr-0.5 pl-[3px] text-[#e6e6e6]">
              <Icon name="square" className="size-[15px]" />
              <Icon name="down" className="ml-px size-3" />
            </button>
          </Group>
          <Group>
            <IconBtn icon="prop" label="Proportional editing" />
            <button aria-label="Falloff" className="flex items-center pl-1 text-[#888]">
              <Icon name="falloff" className="size-[15px]" />
              <Icon name="down" className="size-3 opacity-40" />
            </button>
          </Group>
        </div>
        <div className="ml-auto flex gap-1.5">
          <MenuBtn icon="vis" label="Object visibility" />
          <Group><IconBtn icon="gizmo" label="Gizmos" active /><DownBtn label="Gizmo options" /></Group>
          <Group><IconBtn icon="overlays" label="Overlays" active /><DownBtn label="Overlay options" /></Group>
          <Group><IconBtn icon="xray" label="X-ray" /></Group>
          <Group className="gap-px">
            <IconBtn icon="wire" label="Wireframe" />
            <IconBtn icon="solid" label="Solid" active />
            <IconBtn icon="material" label="Material preview" />
            <IconBtn icon="rendered" label="Rendered" />
            <DownBtn label="Shading options" />
          </Group>
        </div>
      </header>
      <div className="relative flex h-[26px] shrink-0 items-center justify-between bg-[#303030]/80 pr-[9px] pl-11">
        <div className="flex h-[18px] gap-px overflow-hidden rounded-[3px]">
          {['selSet', 'selAdd', 'selSub', 'selXor', 'selAnd'].map((n, i) => (
            <IconBtn key={n} icon={n} label={n} active={i === 0} />
          ))}
        </div>
        <button className={clsx('flex h-[19px] items-center pr-0.5 pl-1 text-[#e0e0e0]', frame)}>
          Options <Icon name="down" className="ml-0.5 size-3" />
        </button>
      </div>
      <div className="relative flex min-h-0 flex-1">
        <Toolbar />
        <div className="ml-[19px] pt-2 leading-[18px] text-[#ececec]">
          <p>User Perspective</p>
          <p>(100) Scene Collection | Snow</p>
        </div>
        <div className="mt-[91px] mr-[9px] ml-auto flex flex-col gap-0.5 text-[#e6e6e6]">
          {['zoom', 'hand', 'movie', 'persp'].map(n => (
            <button key={n} aria-label={n} className="flex size-7 items-center justify-center rounded-full bg-[#292929]">
              <Icon name={n} className="size-[17px]" />
            </button>
          ))}
        </div>
        <button aria-label="Show sidebar" className="absolute top-[15px] right-0 flex h-3.5 w-2 items-center justify-center rounded-l bg-[#2e2e2e] text-[#bbb]">
          <Icon name="left" className="size-2.5" />
        </button>
      </div>
    </section>
  )
}

/* ---------- node editor ---------- */

// canvas coordinates are window coordinates, shifted by the editor's corner
const ORIGIN = { x: 57, y: 421 }
const at = (x: number, y: number) => ({ left: x - ORIGIN.x, top: y - ORIGIN.y })

type SocketKind = 'circle' | 'diamond' | 'dot' | 'ring'

function Socket({ kind, color, right, className }: { kind: SocketKind; color: string; right?: boolean; className?: string }) {
  return (
    <svg
      viewBox="0 0 8 8"
      aria-hidden
      className={clsx('absolute size-2', right ? '-right-1' : '-left-1', className ?? 'top-[3px]')}
    >
      {kind === 'circle' && <circle cx="4" cy="4" r="2.700" fill={color} stroke="#111" strokeWidth=".6" />}
      {kind === 'ring' && <circle cx="4" cy="4" r="2.800" fill="#1d1d1d" stroke={color} />}
      {(kind === 'diamond' || kind === 'dot') && <path d="m4 .7 3.300 3.300L4 7.300.7 4z" fill={color} stroke="#111" strokeWidth=".5" />}
      {kind === 'dot' && <circle cx="4" cy="4" r="1.100" fill="#151515" />}
    </svg>
  )
}

function Row({ kind, color = GREY, out, className, children }: { kind?: SocketKind; color?: string; out?: boolean; className?: string; children: ReactNode }) {
  return (
    <div className={clsx('relative flex h-[13px] items-center px-[7px]', out && 'justify-end', className)}>
      {kind && <Socket kind={kind} color={color} right={out} />}
      {children}
    </div>
  )
}

function Field({ label, value, className }: { label?: string; value: string; className?: string }) {
  return (
    <label className={clsx('flex h-[11px] w-full items-center', className ?? 'rounded-[2px] bg-[#545454]', label && 'px-2')}>
      {label}
      <input
        aria-label={label ?? 'Value'}
        defaultValue={value}
        className={clsx('w-full min-w-0 bg-transparent outline-none', label ? 'text-right' : 'text-center')}
      />
    </label>
  )
}

function Pick({ value, className }: { value: string; className?: string }) {
  return (
    <Row className={className}>
      <label className="relative flex h-[11px] w-full items-center rounded-[2px] border border-[#3f3f3f] bg-[#282828]">
        <select aria-label={value} className="h-full w-full appearance-none bg-transparent pl-[3px] outline-none">
          <option>{value}</option>
        </select>
        <Icon name="down" className="pointer-events-none absolute right-0 size-2" />
      </label>
    </Row>
  )
}

function Check({ label, checked }: { label: string; checked?: boolean }) {
  return (
    <label className="flex items-center gap-0.5 whitespace-nowrap">
      <span className="relative flex size-2">
        <input type="checkbox" defaultChecked={checked} className="peer size-2 appearance-none rounded-[1px] bg-[#545454] checked:bg-[#4772b3]" />
        <svg viewBox="0 0 8 8" aria-hidden className="pointer-events-none absolute inset-0 hidden size-2 peer-checked:block">
          <path d="m1.700 4 1.800 1.800 3-4" fill="none" stroke="#fff" strokeWidth="1.200" />
        </svg>
      </span>
      {label}
    </label>
  )
}

function Triple({ label, labels, values, className }: { label: string; labels?: string[]; values: string[]; className?: string }) {
  return (
    <div className={clsx('relative', className)}>
      <Socket kind="dot" color={VECTOR} className="top-1/2 -mt-1" />
      <Row>{label}</Row>
      <div className="mx-[7px] flex h-[35px] flex-col gap-px overflow-hidden rounded-[2px] bg-[#444]">
        {values.map((v, i) => <Field key={i} label={labels?.[i]} value={v} className="flex-1 bg-[#545454]" />)}
      </div>
    </div>
  )
}

function Toggle({ options, className }: { options: [string, string]; className?: string }) {
  return (
    <Row className={className}>
      <div className="grid h-[11px] w-full grid-cols-2 gap-px overflow-hidden rounded-[2px] bg-[#444]">
        {options.map((o, i) => (
          <button
            key={o}
            aria-pressed={i === 0}
            className={clsx('flex items-center justify-center whitespace-nowrap', i === 0 ? 'bg-[#4772b3] text-white' : 'bg-[#545454]')}
          >
            {o}
          </button>
        ))}
      </div>
    </Row>
  )
}

function Node({ x, y, title, head, selected, flush, children }: { x: number; y: number; title: string; head: string; selected?: boolean; flush?: boolean; children: ReactNode }) {
  return (
    <article
      style={at(x, y)}
      className={clsx(
        'absolute w-[83px] rounded-[2px] bg-[#303030] shadow-[0_1px_4px_rgba(0,0,0,0.7)]',
        selected && 'outline outline-[#e0e0e0]',
      )}
    >
      <h3 className={clsx('flex h-3 items-center gap-px rounded-t-[2px] pl-1 whitespace-nowrap text-[#e6e6e6]', head)}>
        <Icon name="down" className="size-2.5" />
        {title}
      </h3>
      <div className={clsx('pb-[3px]', !flush && 'pt-0.5')}>{children}</div>
    </article>
  )
}

const HEAD_GEO = 'bg-[#1d725e]'
const HEAD_MATH = 'bg-[#246283]'
const HEAD_INPUT = 'bg-[#83314a]'

function MathNode({ x, y, op, value, selected }: { x: number; y: number; op: string; value?: string; selected?: boolean }) {
  return (
    <Node x={x} y={y} title={op} head={HEAD_MATH} selected={selected}>
      <Row out kind={value ? 'dot' : 'diamond'}>Value</Row>
      <Pick value={op} className="mt-[5px]" />
      <Row className="mt-0.5"><Check label="Clamp" /></Row>
      <Row kind="dot" className="mt-0.5">Value</Row>
      {value ? <Row kind="dot"><Field label="Value" value={value} /></Row> : <Row kind="diamond">Value</Row>}
    </Node>
  )
}

function SetPosition({ x, y }: { x: number; y: number }) {
  return (
    <Node x={x} y={y} title="Set Position" head={HEAD_GEO}>
      <Row out kind="circle" color={TEAL}>Geometry</Row>
      <Row kind="circle" color={TEAL} className="mt-0.5">Geometry</Row>
      <Row kind="dot" color={BOOL}>Selection</Row>
      <Row kind="diamond" color={VECTOR}>Position</Row>
      <Row kind="diamond" color={VECTOR}>Offset</Row>
    </Node>
  )
}

type Wire = { from: [number, number]; to: [number, number]; color: string; dashed?: boolean }

const WIRES: Wire[] = [
  { from: [40, 540], to: [76, 542], color: TEAL },
  { from: [159, 527], to: [698, 512], color: TEAL },
  { from: [782, 497], to: [999, 503], color: TEAL },
  { from: [943, 552], to: [999, 529], color: TEAL },
  { from: [1082, 488], to: [1098, 519], color: TEAL },
  { from: [298, 593], to: [478, 650], color: GREY },
  { from: [405, 665], to: [478, 663], color: GREY, dashed: true },
  { from: [561, 602], to: [584, 590], color: GREY, dashed: true },
  { from: [170, 745], to: [215, 641], color: GREY },
  { from: [170, 745], to: [506, 785], color: 'url(#toSelected)' },
  { from: [590, 738], to: [869, 786], color: 'url(#fromSelected)' },
  { from: [40, 620], to: [76, 581], color: VECTOR, dashed: true },
  { from: [667, 549], to: [698, 552], color: VECTOR, dashed: true },
  { from: [796, 597], to: [869, 723], color: VECTOR, dashed: true },
  { from: [953, 676], to: [999, 569], color: VECTOR, dashed: true },
]

function curve({ from: [x1, y1], to: [x2, y2] }: Wire) {
  const h = (x2 - x1) / 2.5
  return `M${x1} ${y1}C${x1 + h} ${y1} ${x2 - h} ${y2} ${x2} ${y2}`
}

function Wires() {
  const dots = []
  for (let r = 0; r < 16; r++) {
    for (let c = 0; c < 47; c++) dots.push([Math.round(60 + c * 23.9), Math.round(465 + r * 23.9)])
  }
  return (
    <svg width="1124" height="409" viewBox="57 421 1124 409" aria-hidden className="absolute top-0 left-0">
      <defs>
        <linearGradient id="toSelected"><stop offset="0" stopColor="#a1a1a1" /><stop offset="1" stopColor="#f4f4f4" /></linearGradient>
        <linearGradient id="fromSelected"><stop offset="0" stopColor="#f4f4f4" /><stop offset="1" stopColor="#969696" /></linearGradient>
      </defs>
      {dots.map(([x, y]) => <rect key={`${x}-${y}`} x={x} y={y} width="3" height="3" rx="1" fill="#272727" />)}
      <rect x="68" y="706" width="121" height="84" rx="3" fill="#101010" />
      {WIRES.map((w, i) => (
        <g key={i} fill="none">
          <path d={curve(w)} stroke="#0e0e0e" strokeWidth="3.600" opacity=".7" />
          <path d={curve(w)} stroke={w.color} strokeWidth={w.dashed ? 1.4 : 2} strokeDasharray={w.dashed ? '2.500 .8' : undefined} />
        </g>
      ))}
    </svg>
  )
}

const XYZ = ['X', 'Y', 'Z']

function NodeCanvas() {
  return (
    <div className="absolute inset-0 overflow-hidden text-[7px] leading-[9px] text-[#dcdcdc]">
      <Wires />
      <p style={at(68, 707)} className="absolute w-[121px] text-center text-[6px] text-[#aaa]">Falling Snow Speed</p>

      <SetPosition x={76} y={507} />
      <SetPosition x={699} y={477} />
      <MathNode x={216} y={573} op="Divide" value="-150.000" />
      <MathNode x={479} y={582} op="Multiply" />
      <MathNode x={507} y={717} op="Divide" value="10.000" selected />

      <Node x={322} y={645} title="Random Value" head={HEAD_MATH}>
        <Row out kind="diamond">Value</Row>
        <Pick value="Float" className="mt-1.5" />
        <Row kind="dot" className="mt-0.5"><Field label="Min" value="0.300" /></Row>
        <Row kind="dot"><Field label="Max" value="0.800" /></Row>
        <Row kind="diamond" color={INT}>ID</Row>
        <Row kind="dot" color={INT}><Field label="Seed" value="0" /></Row>
      </Node>

      <Node x={584} y={528} title="Combine XYZ" head={HEAD_MATH}>
        <Row out kind="diamond" color={VECTOR}>Vector</Row>
        <Row kind="dot" className="mt-0.5"><Field label="X" value="0.000" /></Row>
        <Row kind="dot"><Field label="Y" value="0.000" /></Row>
        <Row kind="diamond">Z</Row>
      </Node>

      <Node x={713} y={576} title="Random Value" head={HEAD_MATH}>
        <Row out kind="diamond" color={VECTOR}>Value</Row>
        <Pick value="Vector" className="mt-1.5" />
        <Triple label="Min:" values={['-6.283', '-6.283', '-6.283']} className="mt-0.5" />
        <Triple label="Max:" values={['6.283', '6.283', '6.283']} className="mt-px" />
        <Row kind="diamond" color={INT} className="mt-px">ID</Row>
        <Row kind="dot" color={INT}><Field label="Seed" value="0" /></Row>
      </Node>

      <Node x={999} y={468} title="Instance on Points" head={HEAD_GEO}>
        <Row out kind="circle" color={TEAL}>Instances</Row>
        <Row kind="circle" color={TEAL} className="mt-0.5">Points</Row>
        <Row kind="dot" color={BOOL}>Selection</Row>
        <Row kind="circle" color={TEAL}>Instance</Row>
        <Row kind="dot" color={BOOL}><Check label="Pick Instance" checked /></Row>
        <Row kind="diamond" color={INT}>Instance Index</Row>
        <Row kind="diamond" color={VECTOR}>Rotation</Row>
        <Triple label="Scale:" labels={XYZ} values={['10.000', '10.000', '10.000']} />
      </Node>

      <Node x={1098} y={501} title="Group Output" head="bg-[#1d1d1d]" flush>
        <Row kind="circle" color={TEAL}>Geometry</Row>
        <Row kind="ring" color="#808080">&nbsp;</Row>
      </Node>

      <Node x={860} y={532} title="Collection Info" head={HEAD_INPUT}>
        <Row out kind="circle" color={TEAL}>Geometry</Row>
        <Toggle options={['Original', 'Relative']} className="mt-[5px]" />
        <Row kind="circle" color="#ffffff" className="mt-0.5">
          <div className="flex h-[11px] w-full items-center rounded-[2px] border border-[#3f3f3f] bg-[#1d1d1d] pl-px">
            <Icon name="collection" className="size-2.5" />
            <input aria-label="Collection" defaultValue="Sprinkles" className="w-full min-w-0 bg-transparent pl-[3px] outline-none" />
            <button aria-label="Clear" className="flex"><Icon name="close" className="size-2.5" /></button>
          </div>
        </Row>
        <Row kind="circle" color={BOOL}><Check label="Separate Children" checked /></Row>
        <Row kind="circle" color={BOOL}><Check label="Reset Children" checked /></Row>
      </Node>

      <Node x={870} y={655} title="Rotate Euler" head={HEAD_MATH}>
        <Row out kind="diamond" color={VECTOR}>Rotation</Row>
        <Toggle options={['Axis Angle', 'Euler']} className="mt-[5px]" />
        <Toggle options={['Object', 'Local']} className="mt-0.5" />
        <Row kind="diamond" color={VECTOR} className="mt-0.5">Rotation</Row>
        <Triple label="Axis:" labels={XYZ} values={['1.000', '1.000', '1.000']} />
        <Row kind="dot" className="mt-px">Angle</Row>
      </Node>

      <Node x={87} y={724} title="Value" head={HEAD_INPUT}>
        <Row out kind="circle">Value</Row>
        <Row className="mt-[5px]"><Field value="100.000" className="rounded-[2px] bg-[#7b2ba0]" /></Row>
      </Node>

      <div style={at(489, 704)} className="absolute h-[119px] w-[119px] border-2 border-[#e8452a]" />
    </div>
  )
}

function Breadcrumb() {
  const items = [
    ['object', 'Snow'],
    ['wrench', 'GeometryNodes'],
    ['nodes', 'Points'],
  ]
  return (
    <div className="relative flex h-[43px] items-center text-[#dcdcdc]">
      <Icon name="right" className="-ml-1 size-3.5 text-[#999]" />
      {items.map(([icon, label], i) => (
        <React.Fragment key={label}>
          {i > 0 && <Icon name="right" className="mr-1 ml-2.5 size-4" />}
          <Icon name={icon} className={clsx('size-[15px]', i === 0 && 'ml-2')} />
          <span className="ml-2">{label}</span>
        </React.Fragment>
      ))}
      <button aria-label="Show sidebar" className="ml-auto text-[#bbb]"><Icon name="left" className="size-2.5" /></button>
    </div>
  )
}

function NodeEditor() {
  return (
    <section className="relative flex min-h-0 flex-[409] flex-col overflow-hidden rounded-[5px] bg-[#1d1d1d]">
      <NodeCanvas />
      <header className="relative flex h-[26px] shrink-0 items-center bg-[#232323] px-2">
        <MenuBtn icon="nodes" label="Editor type" />
        <div className="ml-3"><Menus items={['View', 'Select', 'Add', 'Node']} /></div>
        <div className="ml-[229px] flex items-center gap-2">
          <Group className="w-[211px]">
            <button aria-label="Browse node tree" className="flex items-center px-0.5 text-[#e6e6e6]">
              <Icon name="nodes" className="size-[15px]" />
              <Icon name="down" className="size-3" />
            </button>
            <input aria-label="Node tree" defaultValue="Points" className="w-full min-w-0 border-l border-[#3d3d3d] bg-[#1d1d1d] px-1.5 text-[#e0e0e0] outline-none" />
            <div className="flex gap-px bg-[#3d3d3d]">
              <IconBtn icon="shield" label="Fake user" />
              <IconBtn icon="copy" label="New node tree" className="text-[#dcdcdc]" />
              <IconBtn icon="close" label="Unlink" className="text-[#e6e6e6]" />
            </div>
          </Group>
          <button aria-label="Pin" className="text-[#999]"><Icon name="pin" className="size-[15px]" /></button>
        </div>
        <div className="ml-auto flex gap-1.5">
          <button aria-label="Parent node tree" className="flex size-[19px] items-center justify-center rounded-[4px] bg-[#383838] text-[#777]">
            <Icon name="parent" className="size-[15px]" />
          </button>
          <Group>
            <IconBtn icon="magnet" label="Snap" />
            <button aria-label="Snap element" className="flex items-center pr-0.5 pl-1 text-[#e6e6e6]">
              <Icon name="snapGrid" className="size-[15px]" />
              <Icon name="down" className="size-3" />
            </button>
          </Group>
          <Group><IconBtn icon="overlays" label="Overlays" active /><DownBtn label="Overlay options" /></Group>
        </div>
      </header>
      <Breadcrumb />
    </section>
  )
}

/* ---------- outliner ---------- */

type Item = {
  label: string
  level: number
  icon: string
  data?: string[]
  dim?: boolean
  open?: boolean
  selected?: boolean
  toggles?: [string, string]
}

const ITEMS: Item[] = [
  { label: 'Vertex Groups', level: 3, icon: 'vgroup', data: ['vgroup'] },
  { label: 'Light', level: 1, icon: 'bulb', data: ['lightData'], toggles: ['eye', 'camera'] },
  { label: 'Plane', level: 1, icon: 'mesh', data: ['meshData'], dim: true, toggles: ['eyeOff', 'camera'] },
  { label: 'Sprinkles', level: 0, icon: 'collection', open: true, dim: true, toggles: ['eyeOff', 'cameraOff'] },
  { label: 'Long Sprinkle', level: 1, icon: 'mesh', data: ['wrenchLine', 'meshData'], dim: true, toggles: ['eye', 'camera'] },
  { label: 'Loopy Sprinkle', level: 1, icon: 'mesh', data: ['wrenchLine', 'meshData'], dim: true, toggles: ['eye', 'camera'] },
  { label: 'Mini Sprinkle', level: 1, icon: 'mesh', data: ['wrenchLine', 'meshData'], dim: true, toggles: ['eye', 'camera'] },
  { label: 'Round Sprinkle', level: 1, icon: 'mesh', data: ['meshData'], dim: true, toggles: ['eye', 'camera'] },
  { label: 'Short Sprinkle', level: 1, icon: 'mesh', data: ['wrenchLine', 'meshData'], dim: true, toggles: ['eye', 'camera'] },
  { label: 'Snow', level: 0, icon: 'mesh', data: ['wrenchLine', 'meshData'], selected: true, toggles: ['eye', 'camera'] },
]

const INDENT = ['pl-[21px]', 'pl-[41px]', 'pl-[61px]', 'pl-[81px]']

function dataColor(name: string, dim?: boolean) {
  if (name === 'vgroup') return 'text-[#a0a0a0]'
  if (name === 'wrenchLine') return dim ? 'text-[#4a63a3]' : 'text-[#6e96f0]'
  return dim ? 'text-[#148a6d]' : 'text-[#0fc39b]'
}

function TreeRow({ item, odd }: { item: Item; odd: boolean }) {
  const { label, level, icon, data = [], dim, open, selected, toggles } = item
  return (
    <li
      className={clsx(
        'relative flex h-5 items-center pr-[9px]',
        INDENT[level],
        selected ? 'bg-[#334d80]' : odd ? 'bg-[#2b2b2b]' : 'bg-[#282828]',
      )}
    >
      {level > 0 && <span className="absolute left-7 h-full w-px bg-[#484848]" />}
      {level > 1 && <span className="absolute left-12 h-full border-l border-dashed border-[#484848]" />}
      <Icon name={open ? 'triDown' : 'triRight'} className={clsx('size-4', dim ? 'text-[#888]' : 'text-[#d0d0d0]')} />
      <span className={clsx('mx-0.5 flex size-5 items-center justify-center rounded-[3px]', selected && 'bg-[#5a719a]')}>
        <Icon
          name={icon}
          className={clsx(
            'size-[15px]',
            icon === 'mesh' && (selected ? 'text-[#dc935f]' : 'text-[#7f5638]'),
            icon === 'bulb' && 'text-[#c98047]',
            icon === 'vgroup' && 'text-[#d8d8d8]',
            icon === 'collection' && 'text-[#8a8a8a]',
          )}
        />
      </span>
      <span className={clsx('ml-0.5', selected ? 'text-[#ffaf29]' : dim ? 'text-[#7a7a7a]' : 'text-[#cfcfcf]')}>{label}</span>
      <span className="ml-[21px] flex gap-[5px]">
        {data.map(d => <Icon key={d} name={d} className={clsx('size-[15px]', dataColor(d, dim))} />)}
      </span>
      {toggles && (
        <span className={clsx('ml-auto flex items-center gap-1', dim && label !== 'Plane' ? 'text-[#9a9a9a]' : 'text-white')}>
          {open && (
            <span className="relative mr-0.5 flex size-[11px]">
              <input type="checkbox" aria-label={`Enable ${label}`} defaultChecked className="size-[11px] appearance-none rounded-[1px] bg-white" />
              <svg viewBox="0 0 12 12" aria-hidden className="pointer-events-none absolute inset-0 size-[11px]">
                <path d="m2.500 6 2.500 2.500 4.500-6" fill="none" stroke="#222" strokeWidth="1.800" />
              </svg>
            </span>
          )}
          {toggles.map(t => (
            <button key={t} aria-label={`${t} ${label}`} className={clsx('flex', t.endsWith('Off') && 'text-[#6a6a6a]')}>
              <Icon name={t} />
            </button>
          ))}
        </span>
      )}
    </li>
  )
}

function Outliner() {
  return (
    <section className="flex min-h-0 flex-[235] flex-col overflow-hidden rounded-[5px] bg-[#2b2b2b]">
      <header className="flex h-6 shrink-0 items-center bg-[#2b2b2b] pr-2 pl-2">
        <MenuBtn icon="tree" label="Editor type" />
        <div className="ml-1.5"><MenuBtn icon="layers" label="Display mode" /></div>
        <SearchBox label="Search outliner" className="ml-[17px]" />
        <div className="ml-auto flex gap-1.5">
          <MenuBtn icon="filter" label="Filter" />
          <button aria-label="New collection" className="flex size-[19px] items-center justify-center rounded-[4px] bg-[#545454] text-[#cfcfcf]">
            <Icon name="newCol" className="size-[15px]" />
          </button>
        </div>
      </header>
      {/* bottom edge of the row scrolled out above */}
      <div className="h-[3px] shrink-0 pl-[122px]"><div className="h-0.5 w-3.5 rounded-b bg-[#555]" /></div>
      <ul>
        {ITEMS.map((item, i) => <TreeRow key={item.label} item={item} odd={i % 2 === 0} />)}
      </ul>
    </section>
  )
}

/* ---------- properties ---------- */

const TABS: { icon: string; color: string; gap?: boolean; active?: boolean }[] = [
  { icon: 'tool', color: 'text-[#b0b0b0]' },
  { icon: 'renderTab', color: 'text-[#b0b0b0]', gap: true },
  { icon: 'outputTab', color: 'text-[#b0b0b0]' },
  { icon: 'layers', color: 'text-[#b0b0b0]' },
  { icon: 'scene', color: 'text-[#b0b0b0]' },
  { icon: 'world', color: 'text-[#b4545b]' },
  { icon: 'object', color: 'text-[#c98047]', gap: true },
  { icon: 'wrench', color: 'text-[#5b82d6]' },
  { icon: 'particles', color: 'text-[#5b82d6]' },
  { icon: 'physics', color: 'text-[#5b82d6]' },
  { icon: 'constraint', color: 'text-[#5676b8]' },
  { icon: 'meshData', color: 'text-[#0fa882]' },
  { icon: 'material', color: 'text-[#d0636c]', active: true },
  { icon: 'checker', color: 'text-[#b4545b]', gap: true },
]

function Properties() {
  const nameId = useId()
  return (
    <section className="flex min-h-0 flex-[497] flex-col overflow-hidden rounded-[5px] bg-[#303030]">
      <header className="flex h-6 shrink-0 items-center bg-[#303030] pr-[7px] pl-2">
        <MenuBtn icon="props" label="Editor type" />
        <SearchBox label="Search properties" className="ml-[59px]" />
        <div className="ml-auto"><Group><DownBtn label="Options" /></Group></div>
      </header>
      <div className="flex min-h-0 flex-1">
        <div role="tablist" className="flex w-7 shrink-0 flex-col gap-0.5 bg-[#1d1d1d] pt-[9px] pl-0.5">
          {TABS.map(t => (
            <button
              key={t.icon}
              role="tab"
              aria-label={t.icon}
              aria-selected={!!t.active}
              className={clsx(
                'flex h-[26px] shrink-0 items-center rounded-l-[3px] pl-[5px]',
                t.color,
                t.gap && 'mt-2',
                t.active && 'bg-[#303030]',
              )}
            >
              <Icon name={t.icon} />
            </button>
          ))}
        </div>
        <div className="flex min-w-0 flex-1 flex-col pr-2 pl-2">
          <div className="flex h-[34px] items-center text-[#dcdcdc]">
            <Icon name="object" className="ml-0.5 size-[15px]" />
            <span id={nameId} className="ml-[7px]">Snow</span>
            <button aria-label="Pin" className="mr-px ml-auto text-[#8a8a8a]"><Icon name="pin" className="size-[15px]" /></button>
          </div>
          <div className="mt-[7px] flex gap-2">
            <div aria-labelledby={nameId} className="relative flex h-[73px] flex-1 items-end justify-center rounded-[3px] border border-[#3d3d3d] bg-[#272727] pb-1.5 pl-5">
              <span className="absolute bottom-0.5 left-1.5 text-[#cfcfcf]"><Icon name="triRight" className="size-3" /></span>
              <svg viewBox="0 0 12 4" className="h-1 w-3" aria-hidden>
                <path d="M0 .5h12M0 3.500h12" stroke="#999" strokeDasharray="1 2" />
              </svg>
            </div>
            <div className="w-[18px]">
              <div className="grid h-9 grid-rows-2 gap-px overflow-hidden rounded-[4px]">
                <IconBtn icon="plus" label="Add slot" className="text-[#e0e0e0]" />
                <IconBtn icon="minus" label="Remove slot" />
              </div>
              <Group className="mt-1.5 justify-center"><DownBtn label="Slot specials" /></Group>
            </div>
          </div>
          <Group className="mt-[5px] w-full">
            <button aria-label="Browse material" className="flex items-center pl-0.5 text-[#e6e6e6]">
              <Icon name="material" className="size-[15px]" />
              <Icon name="down" className="size-3" />
            </button>
            <button className="flex flex-1 items-center bg-[#545454] pl-0.5 text-[#e0e0e0]">
              <Icon name="plus" className="size-4" />
              <span className="flex-1 text-center">New</span>
            </button>
          </Group>
        </div>
      </div>
    </section>
  )
}

function StatusBar() {
  return (
    <footer className="flex h-[19px] shrink-0 items-center bg-[#1d1d1d] pr-[9px] pb-px pl-[9px] text-[#8a8a8a]">
      <Icon name="mouseL" />
      <span className="ml-[9px] w-[220px]">Pan View</span>
      <Icon name="mouseM" />
      <Icon name="mouseR" className="ml-[228px] size-4" />
      <span className="ml-auto">3.0.0</span>
    </footer>
  )
}

export default function App() {
  return (
    <div className="flex h-screen flex-col bg-white px-14 pt-[38px] pb-[74px] font-['DejaVu_Sans',sans-serif] text-[11px] leading-[14px]">
      <div className="flex min-h-0 flex-1 flex-col overflow-hidden rounded-[10px] bg-[#161616] shadow-[0_14px_40px_rgba(0,0,0,0.5),0_0_1px_rgba(0,0,0,0.6)]">
        <div className="relative flex h-7 shrink-0 items-center justify-center gap-1.5 bg-[#f6f0f7]">
          <div className="absolute left-2 flex gap-2">
            <button aria-label="Close" className="flex size-3 items-center justify-center rounded-full bg-[#ed6a5e]">
              <span className="size-1 rounded-full bg-[#7b1510]" />
            </button>
            <button aria-label="Minimize" className="size-3 rounded-full bg-[#f5bf4f]" />
            <button aria-label="Zoom" className="size-3 rounded-full bg-[#61c554]" />
          </div>
          <svg viewBox="0 0 12 12" className="size-3" aria-hidden>
            <path d="M1.500 0h7l2.500 2.500V12H1.500z" fill="#fff" stroke="#ddd" strokeWidth=".5" />
            <circle cx="6.500" cy="6.500" r="2" fill="#fff" stroke="#dd8a5c" strokeWidth="1.300" />
            <path d="M2.500 8 6 5H3.500" fill="none" stroke="#b8867a" />
          </svg>
          <h1 className="font-['Inter',sans-serif] text-[13px] font-bold text-[#3c3a3d]">donut_12.blend</h1>
        </div>
        <TopBar />
        <main className="flex min-h-0 flex-1 gap-[3px] px-px pt-[3px] pb-[3px]">
          <div className="flex min-w-0 flex-1 flex-col gap-[3px]">
            <Viewport />
            <NodeEditor />
          </div>
          <aside className="flex w-[311px] shrink-0 flex-col gap-1">
            <Outliner />
            <Properties />
          </aside>
        </main>
        <StatusBar />
      </div>
    </div>
  )
}
